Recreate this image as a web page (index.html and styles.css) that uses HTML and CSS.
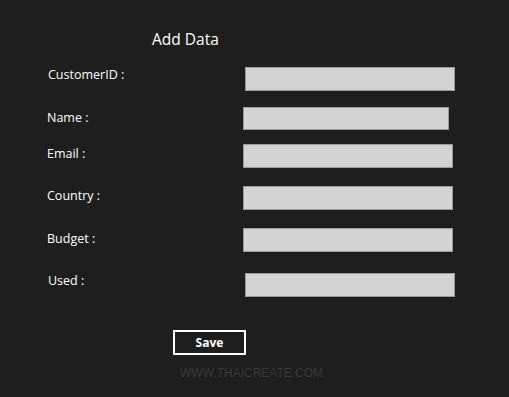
FILE: index.html
```html
<!DOCTYPE html>
<html lang="en">
<head>
  <meta charset="UTF-8">
  <title>Add Data</title>
  <link rel="stylesheet" href="styles.css">
</head>
<body>
  <div class="page">
    <h1 class="title">Add Data</h1>
    <form class="data-form">
      <div class="field field-id">
        <label for="customerId">CustomerID :</label>
        <input type="text" id="customerId">
      </div>
      <div class="field field-name">
        <label for="name">Name :</label>
        <input type="text" id="name">
      </div>
      <div class="field field-email">
        <label for="email">Email :</label>
        <input type="text" id="email">
      </div>
      <div class="field field-country">
        <label for="country">Country :</label>
        <input type="text" id="country">
      </div>
      <div class="field field-budget">
        <label for="budget">Budget :</label>
        <input type="text" id="budget">
      </div>
      <div class="field field-used">
        <label for="used">Used :</label>
        <input type="text" id="used">
      </div>
      <button type="button" class="btn-save">Save</button>
    </form>
    <div class="watermark">WWW.THAICREATE.COM</div>
  </div>
</body>
</html>
```

FILE: styles.css
```css
body {
  margin: 0;
  background: #1e1e1e;
  font-family: 'Open Sans', 'Noto Sans', sans-serif;
  color: #fff;
}
.page {
  width: 509px;
  height: 397px;
  padding-top: 28px;
  box-sizing: border-box;
}
.title {
  margin: 0 0 17px 152px;
  font-size: 15.5px;
  font-weight: 400;
  line-height: 22px;
}
.field {
  display: flex;
  align-items: center;
  height: 24px;
  padding-left: 47px;
}
.field label {
  width: 196px;
  margin-top: -2px;
  font-size: 12.5px;
}
.field input {
  width: 210px;
  height: 24px;
  box-sizing: border-box;
  margin: 0;
  padding: 0 4px;
  background: #d3d3d3;
  border: 1px solid #9a9a9a;
  border-radius: 0;
}
.field-id, .field-used {
  padding-left: 48px;
}
.field-id label, .field-used label {
  width: 197px;
}
.field-id label {
  margin-top: -10px;
}
.field-used label {
  margin-top: -10px;
}
.field-email label {
  margin-top: -6px;
}
.field-country label {
  margin-top: -5px;
}
.field-budget label {
  margin-top: -4px;
}
.field-name { margin-top: 15px; }
.field-name input { width: 206px; height: 23px; }
.field-email { margin-top: 14px; }
.field-country { margin-top: 18px; }
.field-budget { margin-top: 18px; }
.field-used { margin-top: 21px; }
.btn-save {
  display: block;
  margin: 33px 0 0 173px;
  width: 73px;
  height: 25px;
  background: transparent;
  border: 2px solid #fff;
  color: #fff;
  font-family: 'Open Sans', 'Noto Sans', sans-serif;
  font-size: 12px;
  font-weight: 700;
  padding: 0;
}
.watermark {
  margin: 11px 0 0 180px;
  font-family: 'Liberation Sans', Arial, sans-serif;
  font-size: 12px;
  line-height: 14px;
  color: #383838;
}
```
